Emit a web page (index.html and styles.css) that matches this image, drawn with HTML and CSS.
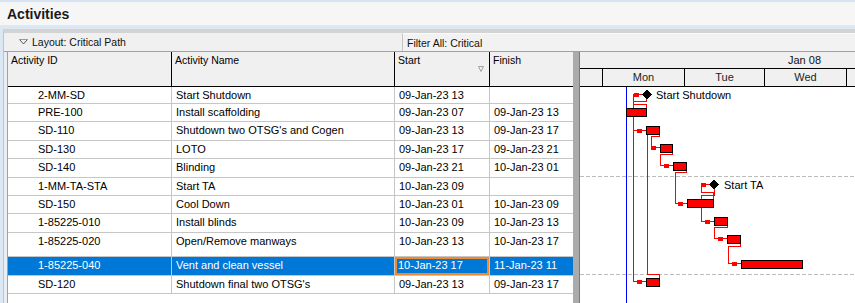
FILE: index.html
```html
<!DOCTYPE html>
<html lang="en">
<head>
    <meta charset="UTF-8">
    <title>Activities</title>
    <link rel="stylesheet" href="styles.css">
</head>
<body>

<div class="titlebar">Activities</div>

<div class="panel">
    <!-- Layout / filter bar -->
    <div class="layoutbar">
        <div class="layout-name">
            <svg class="caret" width="9" height="6" viewBox="0 0 9 6"><polyline points="0.5,0.5 4.5,5 8.5,0.5" fill="none" stroke="#555"/><line x1="0" y1="0.5" x2="9" y2="0.5" stroke="#999"/></svg>
            Layout: Critical Path
        </div>
        <div class="filter">Filter All: Critical</div>
    </div>

    <div class="main">
        <!-- Activity table -->
        <div class="grid">
            <div class="grid-head">
                <div class="hc">Activity ID</div>
                <div class="hc">Activity Name</div>
                <div class="hc hc-sort">Start<svg class="sort" width="6" height="6" viewBox="0 0 6 6"><polygon points="0.5,0.5 5.5,0.5 3,5.5" fill="none" stroke="#a0a0a0"/></svg></div>
                <div class="hc last">Finish</div>
            </div>
            <div class="row first">
                <div class="c id">2-MM-SD</div><div class="c">Start Shutdown</div><div class="c dt">09-Jan-23 13</div><div class="c dt last"></div>
            </div>
            <div class="row">
                <div class="c id">PRE-100</div><div class="c">Install scaffolding</div><div class="c dt">09-Jan-23 07</div><div class="c dt last">09-Jan-23 13</div>
            </div>
            <div class="row">
                <div class="c id">SD-110</div><div class="c">Shutdown two OTSG's and Cogen</div><div class="c dt">09-Jan-23 13</div><div class="c dt last">09-Jan-23 17</div>
            </div>
            <div class="row">
                <div class="c id">SD-130</div><div class="c">LOTO</div><div class="c dt">09-Jan-23 17</div><div class="c dt last">09-Jan-23 21</div>
            </div>
            <div class="row">
                <div class="c id">SD-140</div><div class="c">Blinding</div><div class="c dt">09-Jan-23 21</div><div class="c dt last">10-Jan-23 01</div>
            </div>
            <div class="row">
                <div class="c id">1-MM-TA-STA</div><div class="c">Start TA</div><div class="c dt">10-Jan-23 09</div><div class="c dt last"></div>
            </div>
            <div class="row">
                <div class="c id">SD-150</div><div class="c">Cool Down</div><div class="c dt">10-Jan-23 01</div><div class="c dt last">10-Jan-23 09</div>
            </div>
            <div class="row">
                <div class="c id">1-85225-010</div><div class="c">Install blinds</div><div class="c dt">10-Jan-23 09</div><div class="c dt last">10-Jan-23 13</div>
            </div>
            <div class="row tall">
                <div class="c id">1-85225-020</div><div class="c">Open/Remove manways</div><div class="c dt">10-Jan-23 13</div><div class="c dt last">10-Jan-23 17</div>
            </div>
            <div class="row sel">
                <div class="c id">1-85225-040</div><div class="c">Vent and clean vessel</div><div class="c dt focus">10-Jan-23 17</div><div class="c dt last">11-Jan-23 11</div>
            </div>
            <div class="row">
                <div class="c id">SD-120</div><div class="c">Shutdown final two OTSG's</div><div class="c dt">09-Jan-23 13</div><div class="c dt last">09-Jan-23 17</div>
            </div>
        </div>

        <div class="splitter"></div>

        <!-- Gantt chart -->
        <div class="gantt">
            <div class="g-head">
                <div class="g-week">Jan 08</div>
                <div class="g-days">
                    <div></div>
                    <div>Mon</div>
                    <div>Tue</div>
                    <div>Wed</div>
                    <div></div>
                </div>
            </div>
            <svg class="g-body" width="275" height="216" viewBox="580 87 275 216" shape-rendering="crispEdges">
                <line x1="580" y1="176.5" x2="855" y2="176.5" stroke="#bcbcbc" stroke-dasharray="4 2"/>
                <line x1="580" y1="274.5" x2="855" y2="274.5" stroke="#bcbcbc" stroke-dasharray="4 2"/>
                <line x1="626.5" y1="87" x2="626.5" y2="303" stroke="#0000ff"/>

                <!-- relationship lines -->
                <g fill="none" stroke="#ff0000">
                    <path d="M646.5 108 V104.5 H633.5 V94.5 H643"/>
                    <path d="M646.5 98 V101.5 H633.5 V130.5 H646"/>
                    <path d="M633.5 130.5 V281.5 H646"/>
                    <path d="M659.5 278 V274.5 H647.5 V135"/>
                    <path d="M659.5 135 V136.5 H651.5 V147.5 H660"/>
                    <path d="M672.5 153 V154.5 H660.5 V165.5 H673"/>
                    <path d="M686.5 171 V172.5 H675.5 V203.5 H687"/>
                    <path d="M713.5 199 V192.5 H701.5 V184.5 H710"/>
                    <path d="M714.5 188 V195.5 H701.5 V221.5 H714"/>
                    <path d="M727.5 226 V227.5 H714.5 V238.5 H727"/>
                    <path d="M740.5 244 V246.5 H728.5 V263.5 H741"/>
                </g>
                <g fill="#ff0000">
                    <rect x="634" y="93" width="5" height="4"/>
                    <rect x="637" y="129" width="5" height="4"/>
                    <rect x="637" y="280" width="5" height="4"/>
                    <rect x="651" y="146" width="5" height="4"/>
                    <rect x="664" y="164" width="5" height="4"/>
                    <rect x="678" y="202" width="5" height="4"/>
                    <rect x="701" y="183" width="5" height="4"/>
                    <rect x="705" y="220" width="5" height="4"/>
                    <rect x="718" y="237" width="5" height="4"/>
                    <rect x="732" y="262" width="5" height="4"/>
                </g>

                <!-- activity bars -->
                <g fill="#ff0000" stroke="#000">
                    <rect x="626.5" y="108.5" width="20" height="8"/>
                    <rect x="646.5" y="126.5" width="13" height="8"/>
                    <rect x="660.5" y="144.5" width="12" height="8"/>
                    <rect x="673.5" y="162.5" width="13" height="8"/>
                    <rect x="687.5" y="199.5" width="26" height="8"/>
                    <rect x="714.5" y="217.5" width="13" height="8"/>
                    <rect x="727.5" y="235.5" width="13" height="8"/>
                    <rect x="741.5" y="260.5" width="61" height="8"/>
                    <rect x="646.5" y="278.5" width="13" height="8"/>
                </g>

                <!-- milestones -->
                <g fill="#000">
                    <polygon points="642,94.5 647,89.5 652,94.5 647,99.5"/>
                    <polygon points="709,184.5 714,179.5 719,184.5 714,189.5"/>
                </g>
                <text class="g-label" x="656" y="98.5">Start Shutdown</text>
                <text class="g-label" x="724" y="188.5">Start TA</text>
            </svg>
        </div>
    </div>
</div>

</body>
</html>
```

FILE: styles.css
```css
body {
    margin: 0;
    background-color: #dce7f4;
    font-family: "Liberation Sans", Arial, sans-serif;
    font-size: 11px;
    color: #000;
    overflow: hidden;
    height: 303px;
}
.titlebar {
    height: 23px;
    line-height: 24px;
    padding-left: 7px;
    border-top: 2px solid #d6e3f3;
    border-bottom: 1px solid #e4e8ee;
    background-color: #f6f6f6;
    font-size: 14px;
    font-weight: bold;
    color: #1a1a1a;
}
.panel {
    margin: 3px 0 0 3px;
    border-top: 4px solid #d3d3d3;
    border-left: 1px solid #b9c5d3;
}
/* Layout bar */
.layoutbar {
    display: flex;
    height: 18px;
    background-color: #f0f0f0;
    border-bottom: 1px solid #a0a0a0;
    font-size: 10.5px;
    color: #111;
}
.layout-name {
    width: 383px;
    padding-left: 15px;
    display: flex;
    align-items: center;
    gap: 4px;
}
.caret {
    display: block;
}
.filter {
    flex: 1;
    display: flex;
    align-items: center;
    padding-left: 4px;
    border-left: 1px solid #c4c4c4;
    border-top: 1px solid #fafafa;
    background-color: #f2f2f2;
}
.main {
    display: flex;
    height: 251px;
    padding-left: 3px;
    background-color: #e9eef5;
}
/* Table */
.grid {
    width: 565px;
    border-left: 1px solid #a0a0a0;
    background-color: #fff;
}
.grid-head,
.row {
    display: grid;
    grid-template-columns: 164px 223px 95px 83px;
}
.grid-head {
    height: 35px;
    box-sizing: border-box;
    background-color: #f0f0f0;
    border-bottom: 1px solid #000;
    font-size: 10.5px;
}
.hc {
    padding: 2px 0 0 3px;
    border-right: 1px solid #000;
    line-height: 13px;
}
.hc.last {
    border-right: none;
}
.hc-sort {
    display: flex;
    justify-content: space-between;
}
.sort {
    align-self: flex-end;
    margin: 0 5px 14px 0;
}
.row {
    height: 18.4px;
    box-sizing: border-box;
    border-bottom: 1px solid #c6c6c6;
}
.row.first {
    height: 17px;
}
.row.tall {
    height: 24.4px;
}
.c {
    padding: 1px 0 0 4px;
    line-height: 14px;
    border-right: 1px solid #c6c6c6;
    white-space: nowrap;
    overflow: hidden;
}
.c.id {
    padding-left: 30px;
}
.c.last {
    border-right: none;
}
.row.sel {
    background-color: #0078d7;
    color: #fff;
}
.c.focus {
    box-shadow: inset 0 0 0 2px #ef8a2e;
    padding-left: 3px;
}
.splitter {
    width: 6px;
    background-color: #ababab;
    border-right: 1px solid #7a7a7a;
}
/* Gantt */
.gantt {
    width: 275px;
    background-color: #fff;
}
.g-head {
    height: 35px;
    background-color: #f0f0f0;
}
.g-week {
    height: 16px;
    line-height: 17px;
    padding-left: 208px;
    border-bottom: 1px solid #000;
    color: #111;
}
.g-days {
    display: grid;
    grid-template-columns: 23px 82px 80px 82px 1fr;
    height: 18px;
    border-bottom: 1px solid #000;
    box-sizing: border-box;
}
.g-days div {
    border-right: 1px solid #000;
    text-align: center;
    line-height: 17px;
    color: #1e1e1e;
}
.g-days div:last-child {
    border-right: none;
}
.g-body {
    display: block;
}
.g-label {
    font-family: "Liberation Sans", Arial, sans-serif;
    font-size: 11px;
    fill: #000;
}
```
